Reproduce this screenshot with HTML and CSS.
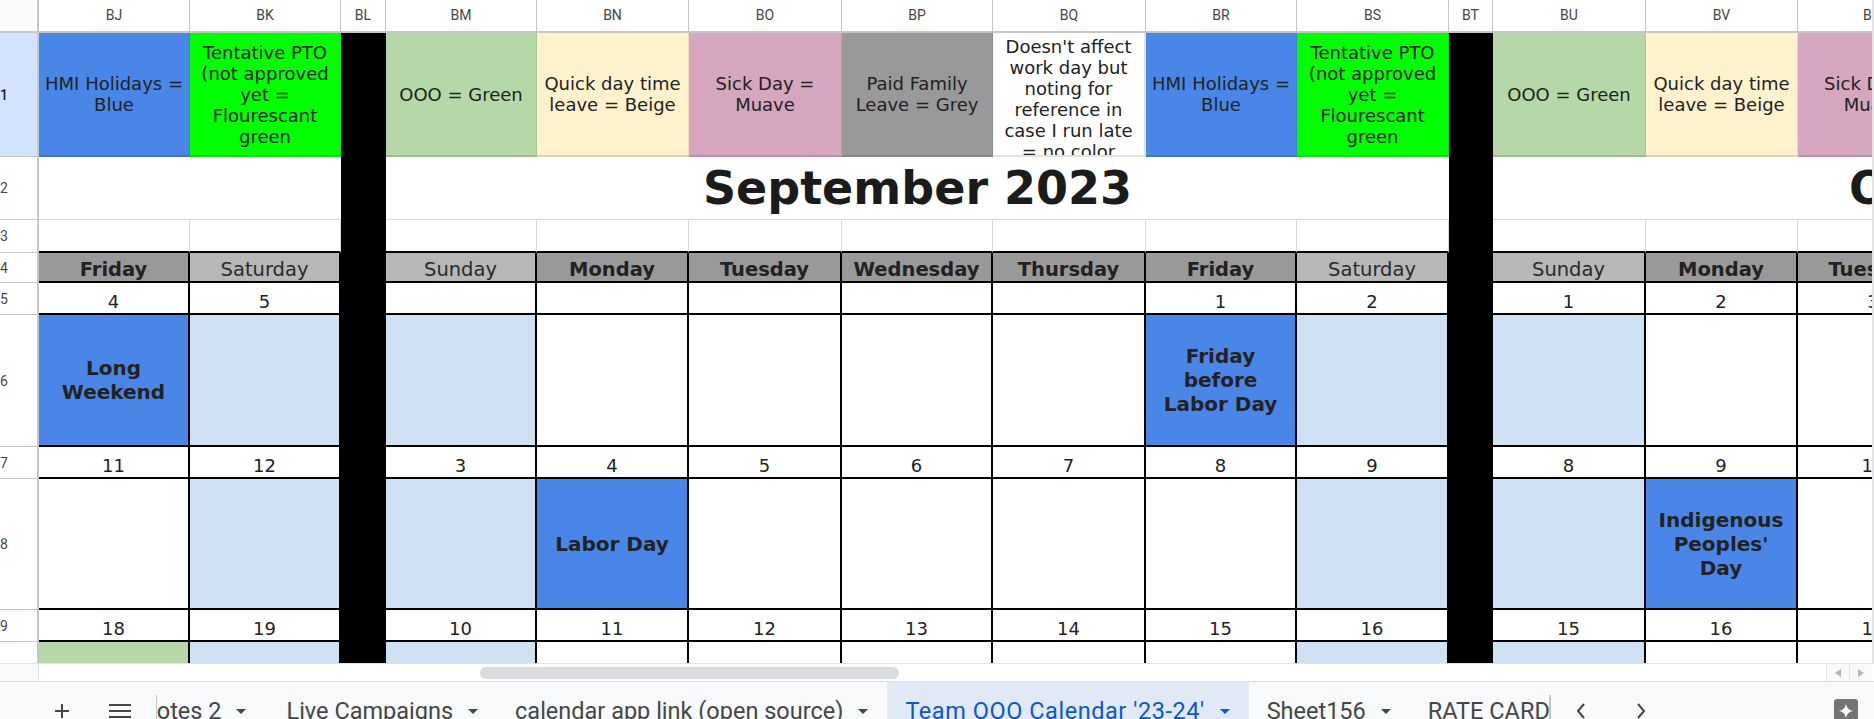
FILE: index.html
```html
<!DOCTYPE html>
<html>
<head>
<meta charset="utf-8">
<link rel="stylesheet" href="styles.css">
</head>
<body>
<div class="app">
  <div class="viewport">
    <div class="grid">
      <div class="row hdr">
        <div class="corner"><div class="corner-box"></div></div>
        <div class="ch">BJ</div><div class="ch">BK</div><div class="ch">BL</div><div class="ch">BM</div><div class="ch">BN</div><div class="ch">BO</div><div class="ch">BP</div><div class="ch">BQ</div><div class="ch">BR</div><div class="ch">BS</div><div class="ch">BT</div><div class="ch">BU</div><div class="ch">BV</div><div class="ch">BW</div>
      </div>
      <div class="row r1">
        <div class="rh sel">1</div>
        <div class="lg blue">HMI Holidays = Blue</div>
        <div class="lg fgreen">Tentative PTO (not approved yet = Flourescant green</div>
        <div class="blk"></div>
        <div class="lg green">OOO = Green</div>
        <div class="lg beige">Quick day time leave = Beige</div>
        <div class="lg mauve">Sick Day = Muave</div>
        <div class="lg grey">Paid Family Leave = Grey</div>
        <div class="lg note">Doesn't affect work day but noting for reference in case I run late = no color</div>
        <div class="lg blue">HMI Holidays = Blue</div>
        <div class="lg fgreen">Tentative PTO (not approved yet = Flourescant green</div>
        <div class="blk"></div>
        <div class="lg green">OOO = Green</div>
        <div class="lg beige">Quick day time leave = Beige</div>
        <div class="lg mauve">Sick Day = Muave</div>
      </div>
      <div class="row r2">
        <div class="rh">2</div>
        <div class="tcell span2"></div>
        <div class="blk"></div>
        <div class="tcell title span7">September 2023</div>
        <div class="blk"></div>
        <div class="tcell title span4">October 2023</div>
      </div>
      <div class="row r3">
        <div class="rh">3</div>
        <div class="e3"></div><div class="e3"></div>
        <div class="blk"></div>
        <div class="e3"></div><div class="e3"></div><div class="e3"></div><div class="e3"></div><div class="e3"></div><div class="e3"></div><div class="e3"></div>
        <div class="blk"></div>
        <div class="e3"></div><div class="e3"></div><div class="e3"></div>
      </div>
      <div class="row r4">
        <div class="rh">4</div>
        <div class="dh dk">Friday</div><div class="dh dl">Saturday</div>
        <div class="blk"></div>
        <div class="dh dl">Sunday</div><div class="dh dk">Monday</div><div class="dh dk">Tuesday</div><div class="dh dk">Wednesday</div><div class="dh dk">Thursday</div><div class="dh dk">Friday</div><div class="dh dl">Saturday</div>
        <div class="blk"></div>
        <div class="dh dl">Sunday</div><div class="dh dk">Monday</div><div class="dh dk">Tuesday</div>
      </div>
      <div class="row r5">
        <div class="rh">5</div>
        <div class="dt">4</div><div class="dt">5</div>
        <div class="blk"></div>
        <div class="dt"></div><div class="dt"></div><div class="dt"></div><div class="dt"></div><div class="dt"></div><div class="dt">1</div><div class="dt">2</div>
        <div class="blk"></div>
        <div class="dt">1</div><div class="dt">2</div><div class="dt">3</div>
      </div>
      <div class="row r6">
        <div class="rh">6</div>
        <div class="ev blue">Long Weekend</div><div class="ev lb"></div>
        <div class="blk"></div>
        <div class="ev lb"></div><div class="ev"></div><div class="ev"></div><div class="ev"></div><div class="ev"></div><div class="ev blue">Friday before Labor Day</div><div class="ev lb"></div>
        <div class="blk"></div>
        <div class="ev lb"></div><div class="ev"></div><div class="ev"></div>
      </div>
      <div class="row r7">
        <div class="rh">7</div>
        <div class="dt">11</div><div class="dt">12</div>
        <div class="blk"></div>
        <div class="dt">3</div><div class="dt">4</div><div class="dt">5</div><div class="dt">6</div><div class="dt">7</div><div class="dt">8</div><div class="dt">9</div>
        <div class="blk"></div>
        <div class="dt">8</div><div class="dt">9</div><div class="dt">10</div>
      </div>
      <div class="row r8">
        <div class="rh">8</div>
        <div class="ev"></div><div class="ev lb"></div>
        <div class="blk"></div>
        <div class="ev lb"></div><div class="ev blue">Labor Day</div><div class="ev"></div><div class="ev"></div><div class="ev"></div><div class="ev"></div><div class="ev lb"></div>
        <div class="blk"></div>
        <div class="ev lb"></div><div class="ev blue">Indigenous Peoples' Day</div><div class="ev"></div>
      </div>
      <div class="row r9">
        <div class="rh">9</div>
        <div class="dt">18</div><div class="dt">19</div>
        <div class="blk"></div>
        <div class="dt">10</div><div class="dt">11</div><div class="dt">12</div><div class="dt">13</div><div class="dt">14</div><div class="dt">15</div><div class="dt">16</div>
        <div class="blk"></div>
        <div class="dt">15</div><div class="dt">16</div><div class="dt">17</div>
      </div>
      <div class="row r10">
        <div class="rh">10</div>
        <div class="ev gr"></div><div class="ev lb"></div>
        <div class="blk"></div>
        <div class="ev lb"></div><div class="ev"></div><div class="ev"></div><div class="ev"></div><div class="ev"></div><div class="ev"></div><div class="ev lb"></div>
        <div class="blk"></div>
        <div class="ev lb"></div><div class="ev"></div><div class="ev"></div>
      </div>
    </div>
    <div class="vedge"></div>
  </div>

  <div class="hscroll">
    <div class="hs-left"></div>
    <div class="hs-track"><div class="hs-thumb"></div></div>
    <div class="hs-btn"><svg width="6" height="8" viewBox="0 0 6 8"><path d="M6 0v8L0 4z" fill="#b4b4b4"/></svg></div>
    <div class="hs-btn"><svg width="6" height="8" viewBox="0 0 6 8"><path d="M0 0v8l6-4z" fill="#b4b4b4"/></svg></div>
  </div>

  <div class="tabbar">
    <div class="tb-btn first"><svg width="16" height="16" viewBox="0 0 16 16"><path d="M8 1v14M1 8h14" stroke="#444746" stroke-width="2"/></svg></div>
    <div class="tb-btn"><svg width="22" height="16" viewBox="0 0 22 16"><path d="M0 2h22M0 8h22M0 14h22" stroke="#444746" stroke-width="2"/></svg></div>
    <div class="tb-sep"></div>
    <div class="tabs">
      <div class="tabstrip">
        <div class="tab lead">Notes 2<svg class="dd" width="10" height="5" viewBox="0 0 10 5"><path d="M0 0h10L5 5z"/></svg></div>
        <div class="tab">Live Campaigns<svg class="dd" width="10" height="5" viewBox="0 0 10 5"><path d="M0 0h10L5 5z"/></svg></div>
        <div class="tab">calendar app link (open source)<svg class="dd" width="10" height="5" viewBox="0 0 10 5"><path d="M0 0h10L5 5z"/></svg></div>
        <div class="tab active">Team OOO Calendar '23-24'<svg class="dd" width="10" height="5" viewBox="0 0 10 5"><path d="M0 0h10L5 5z"/></svg></div>
        <div class="tab">Sheet156<svg class="dd" width="10" height="5" viewBox="0 0 10 5"><path d="M0 0h10L5 5z"/></svg></div>
        <div class="tab">RATE CARD<svg class="dd" width="10" height="5" viewBox="0 0 10 5"><path d="M0 0h10L5 5z"/></svg></div>
      </div>
    </div>
    <div class="tb-sep2"></div>
    <div class="nav"><svg width="10" height="16" viewBox="0 0 10 16"><path d="M8 1L2 8l6 7" fill="none" stroke="#444746" stroke-width="2"/></svg></div>
    <div class="nav"><svg width="10" height="16" viewBox="0 0 10 16"><path d="M2 1l6 7-6 7" fill="none" stroke="#444746" stroke-width="2"/></svg></div>
    <div class="tb-fill"></div>
    <div class="star"><svg width="24" height="24" viewBox="0 0 24 24"><rect width="24" height="24" rx="3" fill="#747474"/><path d="M12 4.5C12.7 9.2 14.8 11.3 19.5 12 14.8 12.7 12.7 14.8 12 19.5 11.3 14.8 9.2 12.7 4.5 12 9.2 11.3 11.3 9.2 12 4.5Z" fill="#fff"/></svg></div>
  </div>
</div>
</body>
</html>
```

FILE: styles.css
```css
html, body {
  margin: 0;
  padding: 0;
  background: #fff;
  overflow: hidden;
}

.app {
  width: 1874px;
  height: 719px;
  overflow: hidden;
  display: flex;
  flex-direction: column;
  font-family: "DejaVu Sans", Verdana, sans-serif;
  color: #222;
}

.viewport {
  display: flex;
  height: 663px;
  flex: none;
}

.grid {
  width: 1872px;
  height: 663px;
  overflow: hidden;
}

.vedge {
  width: 2px;
  background: #e3e3e3;
}

.row {
  display: grid;
  grid-template-columns: 39px 151px 151px 45px 151px 152px 153px 151px 153px 151px 152px 44px 153px 152px 152px 606px;
}

.row > div {
  box-sizing: border-box;
  display: flex;
  align-items: center;
  justify-content: center;
  text-align: center;
  overflow: hidden;
}

.hdr { height: 33px; }
.r1 { height: 124px; }
.r2 { height: 63px; }
.r3 { height: 33px; }
.r4 { height: 30px; }
.r5, .r7, .r9 { height: 32px; }
.r6 { height: 132px; }
.r8 { height: 131px; }
.r10 { height: 131px; }

/* headers */
.corner {
  background: #fff;
  border-right: 2px solid #c4c7c5;
  border-bottom: 2px solid #c4c7c5;
  align-items: flex-start !important;
  justify-content: flex-start !important;
}
.corner-box {
  width: 33px;
  height: 26px;
  background: #f8f9fa;
}

.ch {
  font-family: Roboto, Arial, sans-serif;
  font-size: 14px;
  color: #444746;
  background: #fff;
  border-right: 1px solid #c4c7c5;
  border-bottom: 2px solid #c4c7c5;
  padding-bottom: 2px;
}

.rh {
  font-family: Roboto, Arial, sans-serif;
  font-size: 14px;
  color: #444746;
  background: #fff;
  border-right: 2px solid #c4c7c5;
  border-bottom: 1px solid #c4c7c5;
  justify-content: flex-start !important;
  padding-left: 0;
}
.rh.sel {
  background: #d3e3fd;
  color: #1f1f1f;
  font-weight: 500;
}

.blk { background: #000; }

/* legend row */
.lg {
  font-size: 18px;
  line-height: 21px;
  padding: 0 3px;
  border-right: 1px solid rgba(0, 0, 0, 0.08);
  border-bottom: 2px solid rgba(0, 0, 0, 0.12);
}
.note {
  background: #fff;
  padding-top: 10px;
  border-right: 2px solid #e2e2e2;
  border-bottom: 2px solid #e2e2e2;
}
.blue { background: #4a86e8; }
.fgreen { background: #00ff00; }
.green { background: #b6d7a8; }
.beige { background: #fff2cc; }
.mauve { background: #d5a6bd; }
.grey { background: #999999; }
.lb { background: #cfe2f3; }
.gr { background: #b6d7a8; }

/* title row */
.tcell {
  background: #fff;
  border-bottom: 1px solid #dadada;
}
.title {
  font-size: 46px;
  font-weight: bold;
  color: #1b1b1b;
  white-space: nowrap;
}
.span2 { grid-column: span 2; }
.span7 { grid-column: span 7; }
.span4 { grid-column: span 4; }

.e3 {
  border-right: 1px solid #dadada;
  border-bottom: 2px solid #000;
}

/* calendar */
.dh, .dt, .ev {
  border-right: 2px solid #000;
  border-bottom: 2px solid #000;
}
.dh {
  font-size: 19.5px;
  line-height: 23px;
  align-items: flex-end !important;
  white-space: nowrap;
}
.dk { background: #999999; font-weight: bold; }
.dl { background: #b7b7b7; color: #2a2a2a; }

.dt {
  font-size: 18px;
  line-height: 21px;
  align-items: flex-end !important;
  padding-bottom: 1px;
  background: #fff;
}

.ev {
  font-size: 20px;
  line-height: 24px;
  font-weight: bold;
  padding: 0 7px;
}

/* horizontal scroll strip */
.hscroll {
  height: 19px;
  flex: none;
  display: flex;
  box-sizing: border-box;
  border-top: 1px solid #e3e3e3;
  border-bottom: 1px solid #dadce0;
  background: #fff;
}
.hs-left {
  width: 38px;
  background: #f8f9fa;
  border-right: 1px solid #e3e3e3;
}
.hs-track {
  flex: 1;
  display: flex;
  align-items: center;
}
.hs-thumb {
  margin-left: 441px;
  width: 419px;
  height: 12px;
  border-radius: 6px;
  background: #dadce0;
}
.hs-btn {
  width: 23px;
  display: flex;
  align-items: center;
  justify-content: center;
  background: #f8f9fa;
  border-left: 1px solid #e3e3e3;
  box-sizing: border-box;
}
.hs-btn:last-child { margin-right: 2px; }

/* tab bar */
.tabbar {
  height: 48px;
  flex: none;
  box-sizing: content-box;
  padding-top: 5px;
  display: flex;
  align-items: stretch;
  background: #f8f9fa;
  font-family: Roboto, Arial, sans-serif;
  font-size: 23.5px;
  color: #444746;
}
.tb-btn {
  width: 40px;
  display: flex;
  align-items: center;
  justify-content: center;
}
.tb-btn.first { margin-left: 42px; margin-right: 18px; }
.tb-sep {
  width: 1px;
  background: #c4c7c5;
  margin: 8px 0 0 16px;
}
.tabs {
  width: 1392px;
  overflow: hidden;
  display: flex;
  margin-top: -5px;
}
.tabstrip {
  display: flex;
  margin-left: -35px;
}
.tab {
  display: flex;
  align-items: center;
  padding: 5px 19px 0 18px;
  white-space: nowrap;
}
.tab.lead { padding-right: 22px; }
.tab .dd {
  margin-left: 15px;
  fill: #444746;
}
.tab.active {
  background: #e1e9f7;
  color: #0b57d0;
  letter-spacing: 0.55px;
}
.tab.active .dd { fill: #0b57d0; }
.tb-sep2 {
  width: 2px;
  background: #c4c7c5;
  margin-top: 8px;
}
.nav {
  width: 60px;
  display: flex;
  align-items: center;
  justify-content: center;
}
.nav:first-of-type { margin-left: 4px; }
.tb-fill { flex: 1; }
.star {
  display: flex;
  align-items: center;
  margin-right: 16px;
}
```
